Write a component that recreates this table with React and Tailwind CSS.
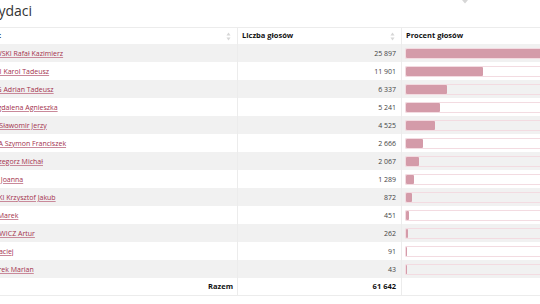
import React from "react";

const candidates = [
  { name: "TRZASKOWSKI Rafał Kazimierz", votes: 25897 },
  { name: "NAWROCKI Karol Tadeusz", votes: 11901 },
  { name: "ZANDBERG Adrian Tadeusz", votes: 6337 },
  { name: "BIEJAT Magdalena Agnieszka", votes: 5241 },
  { name: "MENTZEN Sławomir Jerzy", votes: 4525 },
  { name: "HOŁOWNIA Szymon Franciszek", votes: 2666 },
  { name: "BRAUN Grzegorz Michał", votes: 2067 },
  { name: "SENYSZYN Joanna", votes: 1289 },
  { name: "STANOWSKI Krzysztof Jakub", votes: 872 },
  { name: "JAKUBIAK Marek", votes: 451 },
  { name: "BARTOSZEWICZ Artur", votes: 262 },
  { name: "MACIAK Maciej", votes: 91 },
  { name: "WOCH Marek Marian", votes: 43 },
];

const total = candidates.reduce((s, c) => s + c.votes, 0);

const fmt = (n) => n.toString().replace(/\B(?=(\d{3})+(?!\d))/g, "\u00a0");

function SortIcon() {
  return (
    <svg width="5" height="9" viewBox="0 0 5 9" className="shrink-0">
      <path d="M2.5 0.5 L4.5 3.5 L0.5 3.5 Z" fill="#d6d6d6" />
      <path d="M2.5 8.5 L4.5 5.5 L0.5 5.5 Z" fill="#d6d6d6" />
    </svg>
  );
}

export default function App() {
  return (
    <div
      className="relative w-[540px] h-[304px] overflow-hidden bg-white text-[#333]"
      style={{ fontFamily: '"Open Sans", "Liberation Sans", sans-serif' }}
    >
      {/* sort arrow poking in from the block above */}
      <svg width="6" height="4" viewBox="0 0 6 4" className="absolute left-[462px] top-0">
        <path d="M0 0 L6 0 L3 3.5 Z" fill="#d6d6d6" />
      </svg>

      <div className="h-[27px] ml-[-35px] pt-[1px] text-[14px] leading-[20px] whitespace-nowrap">
        Kandydaci
      </div>

      <div className="ml-[-39px] w-[846px] text-[7px] leading-none">
        <div className="grid grid-cols-[277px_164px_405px] h-[17px] border-t border-[#ececec] bg-white font-bold text-[7.5px] text-[#111]">
          <div className="flex items-center justify-between pl-[4px] pr-[6px] border-r border-[#ececec]">
            <span>Kandydat</span>
            <SortIcon />
          </div>
          <div className="flex items-center justify-between pl-[4px] pr-[6px] border-r border-[#ececec]">
            <span>Liczba głosów</span>
            <SortIcon />
          </div>
          <div className="flex items-center pl-[4px]">
            <span>Procent głosów</span>
          </div>
        </div>

        {candidates.map((c, i) => (
          <div
            key={c.name}
            className={
              "grid grid-cols-[277px_164px_405px] h-[18px] " +
              (i % 2 === 0 ? "bg-[#f1f1f1]" : "bg-white")
            }
          >
            <div className="flex items-center pl-[4px] border-r border-[#ececec] whitespace-nowrap">
              <a href="#" className="text-[#a3304c] underline decoration-[#c9899a]">
                {c.name}
              </a>
            </div>
            <div className="flex items-center justify-end pr-[5px] border-r border-[#ececec] text-[#444]">
              {fmt(c.votes)}
            </div>
            <div className="flex items-center pl-[3px]">
              <div className="w-[400px] h-[11px] border border-[#f3dbe1] rounded-[1px]">
                <div
                  className="h-full bg-[#d49ba9] rounded-[1px]"
                  style={{ width: `${(c.votes / total) * 100}%` }}
                />
              </div>
            </div>
          </div>
        ))}

        <div className="grid grid-cols-[277px_164px_405px] h-[18px] border-b border-[#ececec] bg-white font-bold text-[7.5px] text-[#111]">
          <div className="flex items-center justify-end pr-[4px] border-r border-[#ececec]">
            Razem
          </div>
          <div className="flex items-center justify-end pr-[5px] border-r border-[#ececec]">
            {fmt(total)}
          </div>
          <div />
        </div>
      </div>
    </div>
  );
}
